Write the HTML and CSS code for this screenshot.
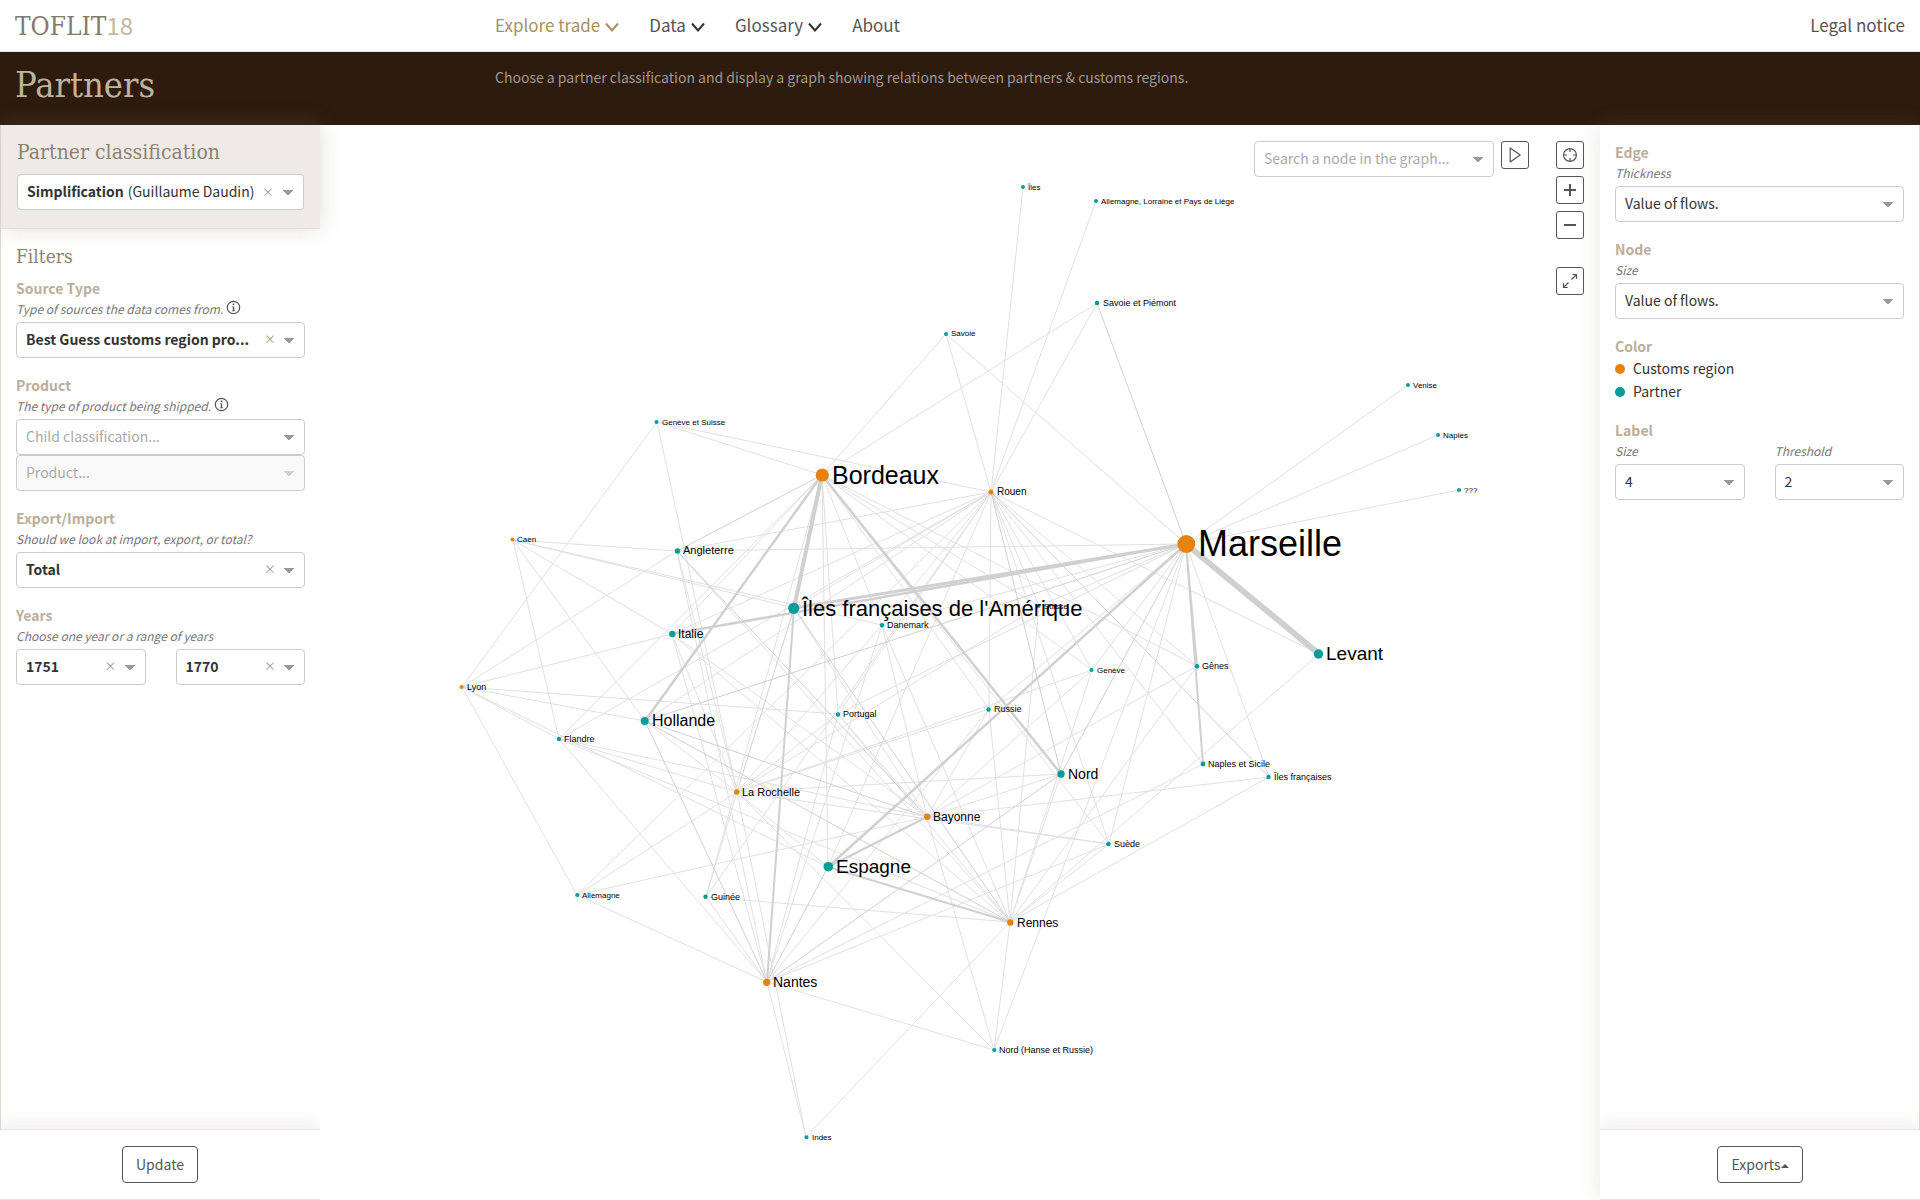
FILE: index.html
```html
<!DOCTYPE html>
<html lang="en">
<head>
<meta charset="utf-8">
<meta name="viewport" content="width=device-width, initial-scale=1">
<title>TOFLIT18 - Partners</title>
<link rel="stylesheet" href="styles.css">
</head>
<body>
<svg class="sprite" aria-hidden="true">
  <symbol id="chevron" viewBox="0 0 14 10"><path d="M1 1.5l6 7 6-7" fill="none" stroke="currentColor" stroke-width="2"/></symbol>
  <symbol id="info" viewBox="0 0 16 16"><circle cx="8" cy="8" r="6.6" fill="none" stroke="currentColor" stroke-width="1.3"/><path d="M7.1 3.6h1.8v1.8H7.1zM6.2 6.8h2.6v4.3h1.1v1H6.2v-1h1.1V7.8H6.2z" fill="currentColor"/></symbol>
</svg>

<header class="topbar">
  <a class="logo" href="#">TOFLIT<span class="logo-year">18</span></a>
  <nav class="menu" aria-label="Main">
    <a class="menu-link menu-link--active" href="#">Explore trade<svg class="chevron"><use href="#chevron"/></svg></a>
    <a class="menu-link" href="#">Data<svg class="chevron"><use href="#chevron"/></svg></a>
    <a class="menu-link" href="#">Glossary<svg class="chevron"><use href="#chevron"/></svg></a>
    <a class="menu-link" href="#">About</a>
  </nav>
  <a class="menu-link" href="#">Legal notice</a>
</header>

<section class="banner">
  <h1 class="banner-title">Partners</h1>
  <p class="banner-text">Choose a partner classification and display a graph showing relations between partners &amp; customs regions.</p>
</section>

<main class="workspace">
  <aside class="panel panel--left">
    <div class="classification">
      <h2 class="classification-title"><label for="classification">Partner classification</label></h2>
      <div class="select select--split">
        <strong>Simplification</strong>
        <select id="classification"><option>(Guillaume Daudin)</option></select>
        <button class="clear" type="button" aria-label="Clear classification">×</button>
      </div>
    </div>
    <form class="panel-body">
      <h3 class="filters-title">Filters</h3>
      <div class="group">
        <label class="label" for="source">Source Type</label>
        <small class="help">Type of sources the data comes from. <svg class="info"><use href="#info"/></svg></small>
        <div class="select select--value">
          <select id="source"><option>Best Guess customs region pro...</option></select>
          <button class="clear" type="button" aria-label="Clear source type">×</button>
        </div>
      </div>
      <div class="group">
        <label class="label" for="product-class">Product</label>
        <small class="help">The type of product being shipped. <svg class="info"><use href="#info"/></svg></small>
        <div class="select select--empty">
          <select id="product-class"><option>Child classification...</option></select>
        </div>
        <div class="select select--empty">
          <select id="product" aria-label="Product" disabled><option>Product...</option></select>
        </div>
      </div>
      <div class="group">
        <label class="label" for="direction">Export/Import</label>
        <small class="help">Should we look at import, export, or total?</small>
        <div class="select select--value">
          <select id="direction"><option>Total</option></select>
          <button class="clear" type="button" aria-label="Clear export/import">×</button>
        </div>
      </div>
      <div class="group">
        <label class="label" for="year-from">Years</label>
        <small class="help">Choose one year or a range of years</small>
        <div class="pair">
          <div class="select select--value">
            <select id="year-from"><option>1751</option></select>
            <button class="clear" type="button" aria-label="Clear first year">×</button>
          </div>
          <div class="select select--value">
            <select id="year-to" aria-label="Last year"><option>1770</option></select>
            <button class="clear" type="button" aria-label="Clear last year">×</button>
          </div>
        </div>
      </div>
    </form>
    <div class="panel-footer"><button class="btn" type="button">Update</button></div>
  </aside>

  <section class="graph" aria-label="Trade graph">
    <svg class="network" viewBox="320 125 1280 1075">
      <g class="edges">
        <!-- Bordeaux -->
        <path d="M822 475L946 334M822 475L1097 303M822 475L657 422M822 475L672 634M822 475L559 739M822 475L882 625M822 475L838 714M822 475L828 867M822 475L989 709M822 475L1092 670M822 475L1197 666M822 475L1109 844M822 475L706 897M822 475L1039 606"/>
        <!-- Rouen -->
        <path d="M991 492L1023 187M991 492L1096 201M991 492L1097 303M991 492L946 334M991 492L657 422M991 492L677 551M991 492L794 608M991 492L672 634M991 492L559 739M991 492L645 721M991 492L882 625M991 492L838 714M991 492L828 867M991 492L989 709M991 492L1092 670M991 492L1197 666M991 492L1203 764M991 492L1319 654M991 492L1109 844M991 492L706 897M991 492L577 895M991 492L1039 606"/>
        <!-- Marseille -->
        <path d="M1186 544L946 334M1186 544L1408 385M1186 544L1438 435M1186 544L1459 490M1186 544L677 551M1186 544L882 625M1186 544L838 714M1186 544L1039 606M1186 544L989 709M1186 544L1092 670M1186 544L1109 844M1186 544L994 1050M1186 544L1269 777"/>
        <!-- Caen and Lyon -->
        <path d="M513 540L677 551M513 540L794 608M513 540L882 625M513 540L559 739M513 540L645 721M513 540L672 634M462 687L657 422M462 687L677 551M462 687L672 634M462 687L838 714M462 687L645 721M462 687L559 739M462 687L828 867M462 687L577 895"/>
        <!-- La Rochelle -->
        <path d="M737 792L657 422M737 792L677 551M737 792L672 634M737 792L645 721M737 792L559 739M737 792L577 895M737 792L882 625M737 792L838 714M737 792L989 709M737 792L1092 670M737 792L1061 774M737 792L1109 844M737 792L828 867M737 792L806 1137M737 792L994 1050M737 792L1039 606M737 792L706 897"/>
        <!-- Bayonne -->
        <path d="M927 817L672 634M927 817L794 608M927 817L559 739M927 817L577 895M927 817L882 625M927 817L838 714M927 817L989 709M927 817L1092 670M927 817L1197 666M927 817L1061 774M927 817L1269 777M927 817L1109 844M927 817L994 1050"/>
        <!-- Rennes -->
        <path d="M1010 922L677 551M1010 922L672 634M1010 922L559 739M1010 922L882 625M1010 922L838 714M1010 922L1092 670M1010 922L1197 666M1010 922L1319 654M1010 922L1061 774M1010 922L1269 777M1010 922L1109 844M1010 922L706 897M1010 922L994 1050M1010 922L806 1137M1010 922L989 709M1010 922L1039 606"/>
        <!-- Nantes -->
        <path d="M767 982L677 551M767 982L672 634M767 982L559 739M767 982L577 895M767 982L706 897M767 982L882 625M767 982L838 714M767 982L989 709M767 982L1203 764M767 982L1109 844M767 982L806 1137M767 982L994 1050"/>
      </g>
      <g class="edges edges--light">
        <path d="M822 475L677 551M1186 544L1097 303M1186 544L645 721M1186 544L1061 774M991 492L1061 774M991 492L1269 777M794 608L737 792M677 551L927 817M645 721L927 817M645 721L1010 922M645 721L767 982M794 608L1010 922M828 867L767 982M1061 774L767 982"/>
      </g>
      <path class="edge" stroke-width="2" d="M828 867L1010 922M1186 544L1203 764M1186 544L1197 666M794 608L767 982"/>
      <path class="edge" stroke-width="2.5" d="M1186 544L672 634M822 475L645 721M822 475L1061 774M1186 544L828 867M927 817L828 867"/>
      <path class="edge" stroke-width="3" d="M1186 544L794 608"/>
      <path class="edge" stroke-width="4" d="M822 475L794 608"/>
      <path class="edge" stroke-width="6" d="M1186 544L1319 654"/>

      <g class="partners">
        <circle cx="1023" cy="187" r="2"/><circle cx="1096" cy="201" r="2"/><circle cx="1097" cy="303" r="2.3"/><circle cx="946" cy="334" r="2"/>
        <circle cx="1408" cy="385" r="2"/><circle cx="1438" cy="435" r="2"/><circle cx="1459" cy="490" r="2"/><circle cx="656.5" cy="422" r="2"/>
        <circle cx="677.5" cy="551" r="2.7"/><circle cx="793.7" cy="608.3" r="5.6"/><circle cx="672.3" cy="634" r="3.2"/><circle cx="882" cy="625.3" r="2.2"/>
        <circle cx="1038.5" cy="606" r="2"/><circle cx="1091.5" cy="670" r="2"/><circle cx="1197" cy="666.3" r="2.3"/><circle cx="1318.5" cy="654" r="4.7"/>
        <circle cx="644.7" cy="721" r="4"/><circle cx="559" cy="739" r="2.2"/><circle cx="838" cy="714.5" r="2.2"/><circle cx="988.5" cy="709.5" r="2.2"/>
        <circle cx="1061" cy="774" r="3.7"/><circle cx="1203" cy="764" r="2.4"/><circle cx="1268.5" cy="777" r="2.2"/><circle cx="1108.5" cy="844" r="2.3"/>
        <circle cx="828.3" cy="866.7" r="4.8"/><circle cx="577.3" cy="895" r="2.1"/><circle cx="705.5" cy="896.7" r="2.2"/><circle cx="994.3" cy="1050" r="2.1"/><circle cx="806.5" cy="1137.3" r="2"/>
      </g>
      <g class="regions">
        <circle cx="822.3" cy="475" r="6.6"/><circle cx="991" cy="492" r="2.5"/><circle cx="1186.3" cy="544" r="9"/><circle cx="512.5" cy="539.5" r="2"/>
        <circle cx="461.5" cy="687" r="2.1"/><circle cx="736.7" cy="792" r="2.7"/><circle cx="927.3" cy="816.7" r="3.2"/><circle cx="1010.3" cy="922.5" r="3.2"/><circle cx="766.7" cy="982.3" r="3.6"/>
      </g>

      <g class="t8">
        <text x="1028" y="190">Îles</text><text x="1101" y="204">Allemagne, Lorraine et Pays de Liège</text><text x="951" y="336">Savoie</text>
        <text x="1413" y="388">Venise</text><text x="1443" y="438">Naples</text><text x="1464" y="493">???</text><text x="662" y="425">Genève et Suisse</text>
        <text x="517" y="542">Caen</text><text x="1044" y="609">Suisse</text><text x="1097" y="673">Genève</text>
        <text x="582" y="898">Allemagne</text><text x="812" y="1140">Indes</text>
      </g>
      <g class="t9">
        <text x="1103" y="306">Savoie et Piémont</text><text x="887" y="628">Danemark</text><text x="843" y="717">Portugal</text><text x="994" y="712">Russie</text>
        <text x="467" y="690">Lyon</text><text x="564" y="742">Flandre</text><text x="1202" y="669">Gênes</text><text x="1208" y="767">Naples et Sicile</text><text x="1274" y="780">Îles françaises</text>
        <text x="1114" y="847">Suède</text><text x="711" y="900">Guinée</text><text x="999" y="1053">Nord (Hanse et Russie)</text>
      </g>
      <g class="t10"><text x="997" y="495">Rouen</text></g>
      <g class="t11"><text x="683" y="554">Angleterre</text><text x="742" y="796">La Rochelle</text></g>
      <g class="t12"><text x="678" y="638">Italie</text><text x="933" y="821">Bayonne</text><text x="1017" y="927">Rennes</text></g>
      <g class="t14"><text x="1068" y="779">Nord</text><text x="773" y="987">Nantes</text></g>
      <g class="t16"><text x="652" y="726">Hollande</text></g>
      <g class="t19"><text x="1326" y="660">Levant</text><text x="836" y="873">Espagne</text></g>
      <g class="t22"><text x="802" y="616">Îles françaises de l'Amérique</text></g>
      <g class="t25"><text x="832" y="484">Bordeaux</text></g>
      <g class="t36"><text x="1198" y="556">Marseille</text></g>
    </svg>

    <div class="graph-tools">
      <div class="select select--empty search">
        <select aria-label="Search a node in the graph"><option>Search a node in the graph...</option></select>
      </div>
      <button class="tool" type="button" aria-label="Start layout"><svg viewBox="0 0 16 16"><path d="M3.2 1v14l10-7z"/></svg></button>
      <div class="tool-column">
        <button class="tool" type="button" aria-label="Recenter"><svg viewBox="0 0 16 16"><circle cx="8" cy="8" r="6.4"/><path d="M8 2v3M8 11v3M2 8h3M11 8h3"/></svg></button>
        <button class="tool" type="button" aria-label="Zoom in"><svg class="bold" viewBox="0 0 16 16"><path d="M8 2v12M2 8h12"/></svg></button>
        <button class="tool" type="button" aria-label="Zoom out"><svg class="bold" viewBox="0 0 16 16"><path d="M2 8h12"/></svg></button>
        <button class="tool tool--apart" type="button" aria-label="Full screen"><svg viewBox="0 0 16 16"><path d="M9.5 6.5L14.5 1.5M10.3 1.5h4.2v4.2M6.5 9.5L1.5 14.5M5.7 14.5H1.5v-4.2"/></svg></button>
      </div>
    </div>
  </section>

  <aside class="panel panel--right">
    <form class="panel-body">
      <div class="group">
        <h3 class="label">Edge</h3>
        <label class="help" for="edge-size">Thickness</label>
        <div class="select"><select id="edge-size"><option>Value of flows.</option></select></div>
      </div>
      <div class="group">
        <h3 class="label">Node</h3>
        <label class="help" for="node-size">Size</label>
        <div class="select"><select id="node-size"><option>Value of flows.</option></select></div>
      </div>
      <div class="group">
        <h3 class="label">Color</h3>
        <ul class="legend">
          <li class="legend-item legend-item--region">Customs region</li>
          <li class="legend-item legend-item--partner">Partner</li>
        </ul>
      </div>
      <div class="group">
        <h3 class="label">Label</h3>
        <div class="pair">
          <div>
            <label class="help" for="label-size">Size</label>
            <div class="select"><select id="label-size"><option>4</option></select></div>
          </div>
          <div>
            <label class="help" for="label-threshold">Threshold</label>
            <div class="select"><select id="label-threshold"><option>2</option></select></div>
          </div>
        </div>
      </div>
    </form>
    <div class="panel-footer"><button class="btn" type="button">Exports<span class="caret-up"></span></button></div>
  </aside>
</main>
</body>
</html>
```
FILE: styles.css
```css
:root {
  --sans: "Noto Sans CJK SC", "Noto Sans CJK JP", "Open Sans", sans-serif;
  --slab: "DejaVu Serif Condensed", "DejaVu Serif", serif;
  --ink: #333;
  --grey: #555;
  --taupe: #8d8271;
  --sand: #bcae9a;
  --region: #e6820e;
  --partner: #049d9a;
}

* { box-sizing: border-box; }

body {
  margin: 0;
  height: 100vh;
  display: flex;
  flex-direction: column;
  background: #fff;
  color: var(--ink);
  font: 14px/20px var(--sans);
}

h1, h2, h3, p, ul { margin: 0; padding: 0; font-weight: 400; }

.sprite { display: none; }

/* Top bar */
.topbar {
  display: grid;
  grid-template-columns: 3fr 7fr 2fr;
  align-items: center;
  height: 52px;
  flex: none;
  border-bottom: 1px solid #e8e6e2;
}
.topbar > * { margin: 0 15px; }
.topbar > .menu-link { justify-self: end; }
.logo {
  color: #857a68;
  font: 26px/48px var(--slab);
  text-decoration: none;
}
.logo-year { color: #c4b8a4; font: 24px/32px var(--sans); }
.menu { display: flex; gap: 30px; }
.menu-link {
  display: flex;
  align-items: center;
  gap: 5px;
  color: var(--grey);
  font-size: 17px;
  line-height: 46px;
  padding-bottom: 2px;
  text-decoration: none;
}
.menu-link--active { color: #a98f60; }
.chevron { width: 14px; height: 10px; margin-top: 4px; color: #333; }
.menu-link--active .chevron { color: #a98f60; }

/* Title band */
.banner {
  display: grid;
  grid-template-columns: 3fr 9fr;
  height: 73px;
  flex: none;
  background: #2d1b0d;
}
.banner-title { padding: 10px 15px; color: #bfb29e; font: 36px/46px var(--slab); }
.banner-text { padding: 15px; color: #a1978b; }

/* Workspace */
.workspace {
  flex: 1;
  min-height: 0;
  display: grid;
  grid-template-columns: minmax(280px, 1fr) 4fr minmax(280px, 1fr);
}
.panel { display: flex; flex-direction: column; min-height: 0; }
.panel--left { border-left: 1px solid #dedbd6; }
.panel--right {
  border-right: 1px solid #dedbd6;
  background: #fff;
  box-shadow: 0 0 20px rgba(141, 130, 113, 0.2);
}
.classification {
  padding: 15px 16px 18px;
  border-bottom: 1px solid #e5dfd9;
  background: #eeeae6;
  box-shadow: 0 0 20px rgba(141, 130, 113, 0.25);
}
.classification-title { margin-bottom: 10px; color: var(--taupe); font: 21px/24px var(--slab); }
.panel-body { flex: 1; min-height: 0; padding: 15px; }
.panel--right .panel-body { padding-top: 16px; }
.filters-title { margin-bottom: 9px; color: var(--taupe); font: 19px/24px var(--slab); }

.group { margin-bottom: 16px; }
.label {
  display: block;
  color: var(--sand);
  font-size: 14px;
  font-weight: 700;
  line-height: 22px;
}
.help {
  display: block;
  color: #777;
  font-size: 12px;
  font-style: italic;
  line-height: 20px;
  margin-bottom: 3px;
  white-space: nowrap;
}
.info { width: 15px; height: 15px; color: var(--grey); vertical-align: -1px; }

/* Drop-downs */
.select { position: relative; }
.select select {
  appearance: none;
  display: block;
  width: 100%;
  height: 36px;
  padding: 0 50px 2px 9px;
  border: 1px solid #ccc;
  border-radius: 4px;
  background:
    linear-gradient(to bottom right, #999 50%, transparent 51%) right 10px center / 5px 5px no-repeat,
    linear-gradient(to bottom left, #999 50%, transparent 51%) right 15px center / 5px 5px no-repeat,
    #fff;
  color: var(--ink);
  font: 14px/20px var(--sans);
  text-overflow: ellipsis;
}
.select--value select { font-weight: 700; padding-right: 46px; }
.select--empty select { color: #aaa; padding-right: 28px; }
.select select:disabled {
  background:
    linear-gradient(to bottom right, #d0d0d0 50%, transparent 51%) right 10px center / 5px 5px no-repeat,
    linear-gradient(to bottom left, #d0d0d0 50%, transparent 51%) right 15px center / 5px 5px no-repeat,
    #f9f9f9;
  opacity: 1;
}
.select--split {
  display: flex;
  align-items: center;
  height: 36px;
  padding-left: 9px;
  border: 1px solid #ccc;
  border-radius: 4px;
  background: #fff;
}
.select--split strong { padding-bottom: 2px; }
.select--split select { flex: 1; width: 0; height: 34px; padding: 0 40px 2px 4px; border: 0; }
.clear {
  position: absolute;
  top: 8px;
  right: 27px;
  width: 16px;
  padding: 0;
  border: 0;
  background: none;
  color: #999;
  font: 12px/18px var(--sans);
}
.pair { display: grid; grid-template-columns: 1fr 1fr; gap: 30px; }

.legend { list-style: none; }
.legend-item { display: flex; align-items: center; gap: 8px; line-height: 23px; }
.legend-item::before { content: ""; width: 10px; height: 10px; border-radius: 50%; background: var(--partner); }
.legend-item--region::before { background: var(--region); }

.panel-footer {
  display: flex;
  justify-content: center;
  align-items: center;
  height: 71px;
  flex: none;
  border-top: 1px solid #e8e6e2;
  border-bottom: 1px solid #e8e6e2;
  background: #fff;
  box-shadow: 0 -6px 16px rgba(141, 130, 113, 0.12);
  clip-path: inset(-30px 0 0 0);
}
.panel--left .panel-footer { margin-left: -1px; }
.panel--right .panel-footer { margin-right: -1px; }
.btn {
  height: 37px;
  padding: 0 13px 2px;
  border: 1px solid var(--grey);
  border-radius: 4px;
  background: #fff;
  color: var(--grey);
  font: 14px/20px var(--sans);
}
.caret-up {
  display: inline-block;
  border: 4px solid transparent;
  border-top: 0;
  border-bottom-color: var(--grey);
  vertical-align: 2px;
}

/* Graph */
.graph { position: relative; min-width: 0; min-height: 0; }
.network { display: block; width: 100%; height: 100%; }
.network text { fill: #000; font-family: "Liberation Sans", Arial, sans-serif; }
.edges path { fill: none; stroke: #e0e0e0; stroke-width: 1px; }
.edges--light path { stroke: #d0d0d0; stroke-width: 1px; }
.edge { stroke: #d0d0d0; }
.partners { fill: var(--partner); }
.regions { fill: var(--region); }
.t8 { font-size: 8px; }
.t9 { font-size: 9px; }
.t10 { font-size: 10px; }
.t11 { font-size: 11px; }
.t12 { font-size: 12px; }
.t14 { font-size: 14px; }
.t16 { font-size: 16px; }
.t19 { font-size: 19px; }
.t22 { font-size: 22px; }
.t25 { font-size: 25px; }
.t36 { font-size: 36px; }

.graph-tools {
  position: absolute;
  top: 16px;
  right: 16px;
  display: flex;
  align-items: flex-start;
  gap: 7px;
}
.search { width: 240px; }
.tool-column { display: flex; flex-direction: column; gap: 7px; margin-left: 20px; }
.tool {
  display: grid;
  place-items: center;
  width: 28px;
  height: 28px;
  padding: 0;
  border: 1px solid var(--grey);
  border-radius: 3px;
  background: #fff;
  color: var(--grey);
}
.tool--apart { margin-top: 21px; }
.tool svg { width: 16px; height: 16px; fill: none; stroke: currentColor; stroke-width: 1.2; stroke-linejoin: round; }
.tool .bold { stroke-width: 2; }
```
